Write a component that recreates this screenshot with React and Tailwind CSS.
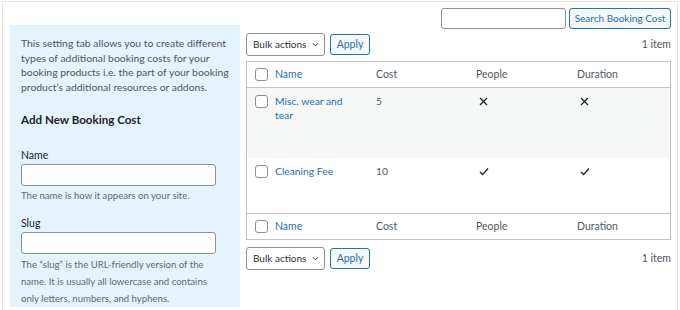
import React from 'react';

const font = { fontFamily: 'Lato, "Open Sans", sans-serif' };

function Checkbox() {
  return <span className="block w-[13px] h-[13px] rounded-[3px] border border-[#8c8f94] bg-white" />;
}

function Cross() {
  return (
    <svg width="9" height="9" viewBox="0 0 9 9" className="mt-[3px]">
      <path d="M1 1L8 8M8 1L1 8" stroke="#1d2327" strokeWidth="1.3" />
    </svg>
  );
}

function Tick() {
  return (
    <svg width="10" height="9" viewBox="0 0 10 9" className="mt-[3px]">
      <path d="M1 5L3.6 7.6L9 1.5" stroke="#1d2327" strokeWidth="1.4" fill="none" />
    </svg>
  );
}

function HeadRow({ border }) {
  return (
    <div className={`flex items-center h-[26px] text-[10.5px] text-[#50575e] ${border}`}>
      <div className="w-[28px] pl-[8px]"><Checkbox /></div>
      <div className="w-[101px] text-[#2271b1]">Name</div>
      <div className="w-[100px]">Cost</div>
      <div className="w-[101px]">People</div>
      <div>Duration</div>
    </div>
  );
}

function Row({ name, cost, mark, h, bg }) {
  return (
    <div className={`flex items-start pt-[6px] text-[10.3px] leading-[14px] text-[#50575e] ${h} ${bg}`}>
      <div className="w-[28px] pl-[8px] pt-[1px]"><Checkbox /></div>
      <div className="w-[101px] pr-[24px] text-[#2271b1]">{name}</div>
      <div className="w-[100px]">{cost}</div>
      <div className="w-[101px] pl-[3px]">{mark}</div>
      <div className="pl-[3px]">{mark}</div>
    </div>
  );
}

function Actions() {
  return (
    <div className="flex items-center">
      <div className="flex items-center justify-between w-[79px] h-[23px] pl-[6px] pr-[5px] border border-[#8c8f94] rounded-[3px] bg-white text-[10px] text-[#2c3338] whitespace-nowrap">
        <span>Bulk actions</span>
        <svg width="7" height="5" viewBox="0 0 8 5"><path d="M1 1L4 4L7 1" stroke="#2c3338" strokeWidth="1.1" fill="none" /></svg>
      </div>
      <div className="ml-[5px] w-[40px] h-[21px] flex items-center justify-center border border-[#2271b1] rounded-[3px] bg-[#f6f7f7] text-[10.5px] text-[#2271b1]">Apply</div>
      <div className="ml-auto text-[10.5px] text-[#50575e]">1 item</div>
    </div>
  );
}

export default function App() {
  return (
    <div className="w-[680px] h-[310px] overflow-hidden bg-white pt-[1px] pl-[2px] pr-[2px]" style={font}>
      <div className="h-[320px] border border-b-0 border-[#e2e4e7] flex pl-[7px] pr-[6px]">
        <div className="w-[230px] mt-[23px] h-[282px] bg-[#e4f3fc] pl-[11px] pr-[4px] pt-[11px]">
          <p className="text-[10.4px] leading-[14.5px] text-[#50575e]">
            This setting tab allows you to create different types of additional booking costs for your booking products i.e. the part of your booking product’s additional resources or addons.
          </p>
          <h2 className="mt-[17px] text-[11.6px] font-bold text-[#1d2327]">Add New Booking Cost</h2>
          <div className="mt-[20px] text-[10.5px] text-[#1d2327]">Name</div>
          <div className="mt-0 w-[195px] h-[22px] bg-white border border-[#8c8f94] rounded-[3px]" />
          <div className="mt-[1px] text-[9.6px] leading-[17px] text-[#646970]">The name is how it appears on your site.</div>
          <div className="mt-[12px] text-[10.5px] text-[#1d2327]">Slug</div>
          <div className="mt-0 w-[195px] h-[22px] bg-white border border-[#8c8f94] rounded-[3px]" />
          <div className="mt-[2px] pr-[14px] text-[9.6px] leading-[17px] text-[#646970]">
            The “slug” is the URL-friendly version of the name. It is usually all lowercase and contains only letters, numbers, and hyphens.
          </div>
        </div>
        <div className="ml-[6px] flex-1 pt-[6px]">
          <div className="flex justify-end items-center">
            <div className="w-[125px] h-[21px] border border-[#8c8f94] rounded-[3px] bg-white" />
            <div className="ml-[3px] w-[102px] h-[21px] flex items-center justify-center border border-[#2271b1] rounded-[3px] bg-[#f6f7f7] text-[10px] text-[#2271b1] whitespace-nowrap">Search Booking Cost</div>
          </div>
          <div className="mt-[4px]"><Actions /></div>
          <div className="mt-[5px] border border-[#c3c4c7]">
            <HeadRow border="border-b border-[#c3c4c7]" />
            <Row name="Misc. wear and tear" cost="5" mark={<Cross />} h="h-[70px]" bg="bg-[#f6f7f7]" />
            <Row name="Cleaning Fee" cost="10" mark={<Tick />} h="h-[55px]" bg="bg-white" />
            <HeadRow border="border-t border-[#c3c4c7]" />
          </div>
          <div className="mt-[7px]"><Actions /></div>
        </div>
      </div>
    </div>
  );
}
